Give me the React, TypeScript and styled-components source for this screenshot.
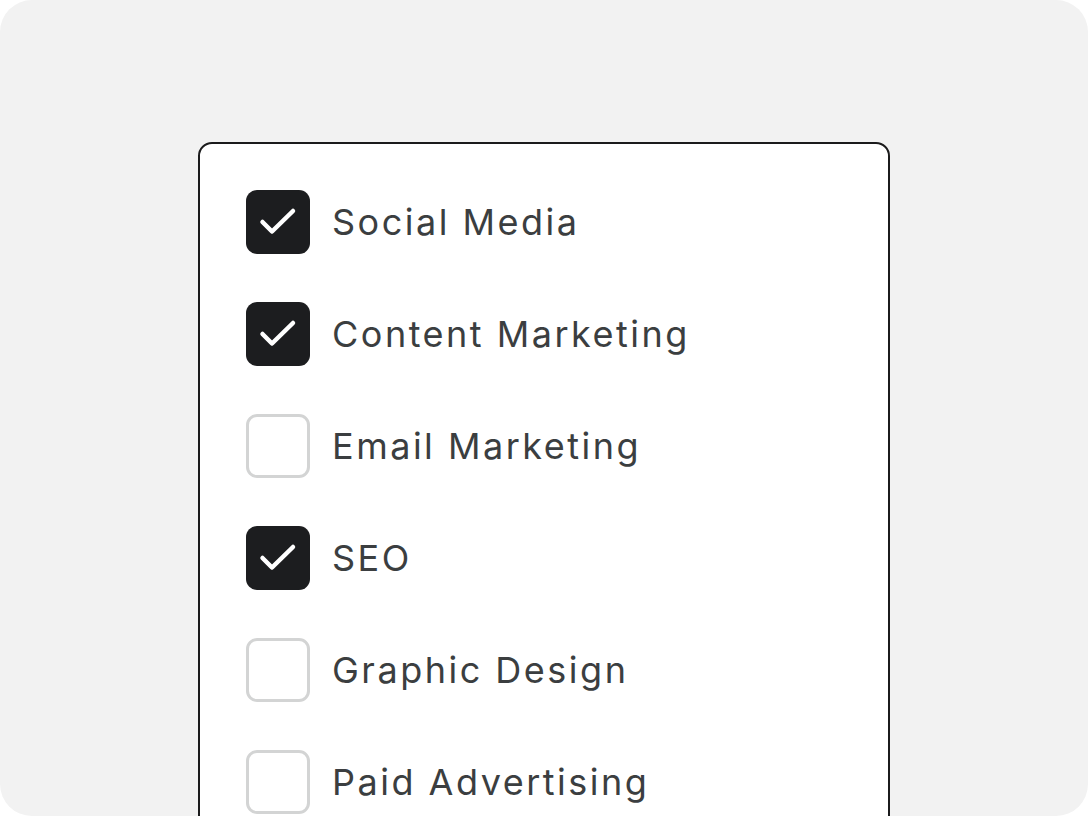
import React from "react";
import styled, { createGlobalStyle } from "styled-components";

const Global = createGlobalStyle`
  html, body { margin: 0; padding: 0; background: #ffffff; }
  body { font-family: Inter, "Noto Sans", sans-serif; }
`;

const Panel = styled.div`
  width: 1088px;
  height: 816px;
  background: #f2f2f2;
  border-radius: 32px;
  overflow: hidden;
  display: flex;
  justify-content: center;
  padding-top: 142px;
  box-sizing: border-box;
`;

const Card = styled.div`
  width: 692px;
  flex-shrink: 0;
  height: 760px;
  box-sizing: border-box;
  background: #ffffff;
  border: 2px solid #1b1b1c;
  border-radius: 14px;
  padding: 46px;
  display: flex;
  flex-direction: column;
  gap: 48px;
`;

const Row = styled.label`
  display: flex;
  align-items: center;
  gap: 22px;
  height: 64px;
`;

const Box = styled.span<{ $checked: boolean }>`
  width: 64px;
  height: 64px;
  box-sizing: border-box;
  flex-shrink: 0;
  border-radius: 11px;
  display: flex;
  align-items: center;
  justify-content: center;
  background: ${(p) => (p.$checked ? "#1c1d1f" : "#ffffff")};
  border: ${(p) => (p.$checked ? "none" : "3px solid #d3d4d4")};
`;

const Label = styled.span`
  font-family: Inter, "Noto Sans", sans-serif;
  font-size: 36px;
  color: #3b3e40;
  letter-spacing: 2.5px;
`;

const Check = () => (
  <svg width="64" height="64" viewBox="0 0 64 64">
    <path
      d="M16.5 32 L26 41.5 L47 21"
      fill="none"
      stroke="#ffffff"
      strokeWidth="4.5"
      strokeLinecap="round"
      strokeLinejoin="round"
    />
  </svg>
);

const items = [
  { label: "Social Media", checked: true },
  { label: "Content Marketing", checked: true },
  { label: "Email Marketing", checked: false },
  { label: "SEO", checked: true },
  { label: "Graphic Design", checked: false },
  { label: "Paid Advertising", checked: false },
];

export default function App() {
  return (
    <>
      <Global />
      <Panel>
        <Card>
          {items.map((it) => (
            <Row key={it.label}>
              <Box $checked={it.checked}>{it.checked && <Check />}</Box>
              <Label>{it.label}</Label>
            </Row>
          ))}
        </Card>
      </Panel>
    </>
  );
}
